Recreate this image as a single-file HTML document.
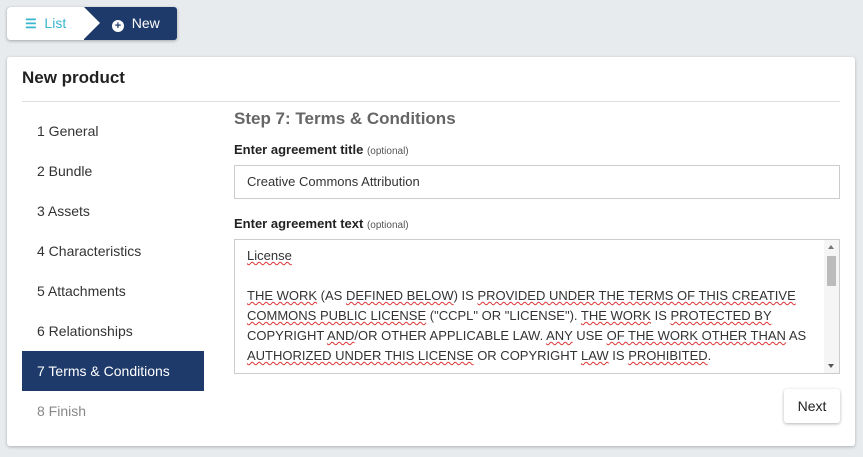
<!DOCTYPE html>
<html><head><style>
*{box-sizing:border-box;margin:0;padding:0}
body{width:863px;height:457px;background:#e8ebee;font-family:"Liberation Sans",sans-serif;color:#333;position:relative;overflow:hidden}
.bc{position:absolute;left:7px;top:7px;width:170px;height:33px;border-radius:3px;box-shadow:0 1px 3px rgba(0,0,0,.3);overflow:hidden;background:#1e3a6a}
.bc .l{position:absolute;left:0;top:0;width:77px;height:33px;background:#fff;color:#3bb6d0;font-size:14px;line-height:33px;padding-left:18px;white-space:nowrap}
.bc .ar{position:absolute;left:77px;top:0;width:0;height:0;border-top:16.5px solid transparent;border-bottom:16.5px solid transparent;border-left:16px solid #fff}
.bc .n{position:absolute;left:105px;top:0;color:#fff;font-size:14px;line-height:33px}
.card{position:absolute;left:7px;top:57px;width:848px;height:389px;background:#fff;border-radius:3px;box-shadow:0 1px 3px rgba(0,0,0,.25)}
h1{position:absolute;left:15px;top:11px;font-size:17px;font-weight:bold;color:#222}
.sep{position:absolute;left:15px;top:44px;width:818px;height:1px;background:#ddd}
.nav{position:absolute;left:15px;top:54px;width:182px}
.nav div{height:40px;line-height:40px;padding-left:15px;font-size:14px;color:#333}
.nav .a{background:#1e3a6a;color:#fff}
.nav .g{color:#888}
.c{position:absolute;left:227px;top:0;width:606px}
h2{position:absolute;top:52px;font-size:17px;color:#666;font-weight:bold}
.lab{position:absolute;font-size:13px;font-weight:bold;color:#222}
.lab small{font-size:10px;font-weight:normal;color:#555}
.inp{position:absolute;top:108px;left:0;width:606px;height:34px;border:1px solid #ccc;font-size:13px;line-height:32px;padding-left:12px;color:#333}
.ta{position:absolute;top:182px;left:0;width:606px;height:135px;border:1px solid #ccc;font-size:13px;line-height:20px;padding:6px 20px 0 12px;color:#333;overflow:hidden}
.ta u{text-decoration:underline wavy #d33;text-decoration-thickness:1px}
.sb{position:absolute;right:0;top:0;width:15px;height:133px;background:#f5f5f5}
.sb .t{position:absolute;left:3px;top:16px;width:9px;height:30px;background:#bbb}
.sb .u{position:absolute;left:4px;top:5px;border-left:3.5px solid transparent;border-right:3.5px solid transparent;border-bottom:4px solid #777}
.sb .d{position:absolute;left:4px;bottom:5px;border-left:3.5px solid transparent;border-right:3.5px solid transparent;border-top:4px solid #555}
.btn{position:absolute;left:777px;top:332px;width:56px;height:34px;border-radius:3px;box-shadow:0 1px 3px rgba(0,0,0,.3);font-size:14px;line-height:34px;text-align:center;color:#222}
</style></head><body>
<div class="bc"><div class="l"><span style="font-size:13px;font-weight:bold">&#9776;</span>&nbsp; List</div><div class="ar"></div><div class="n"><span style="display:inline-block;width:12px;height:12px;border-radius:50%;background:#fff;color:#1e3a6a;font-size:11px;line-height:12px;text-align:center;font-weight:bold;vertical-align:-1px">+</span>&nbsp; New</div></div>
<div class="card">
<h1>New product</h1><div class="sep"></div>
<div class="nav"><div>1 General</div><div>2 Bundle</div><div>3 Assets</div><div>4 Characteristics</div><div>5 Attachments</div><div>6 Relationships</div><div class="a">7 Terms &amp; Conditions</div><div class="g">8 Finish</div></div>
<div class="c">
<h2>Step 7: Terms &amp; Conditions</h2>
<div class="lab" style="top:85px">Enter agreement title <small>(optional)</small></div>
<div class="inp">Creative Commons Attribution</div>
<div class="lab" style="top:159px">Enter agreement text <small>(optional)</small></div>
<div class="ta"><u>License</u><br><br><u>THE WORK</u> (AS <u>DEFINED BELOW</u>) IS <u>PROVIDED UNDER THE TERMS OF THIS CREATIVE COMMONS PUBLIC LICENSE</u> ("CCPL" OR "LICENSE"). <u>THE WORK</u> IS <u>PROTECTED BY</u> COPYRIGHT <u>AND</u>/OR OTHER APPLICABLE LAW. <u>ANY</u> USE <u>OF THE WORK OTHER THAN</u> AS <u>AUTHORIZED UNDER THIS LICENSE</u> OR COPYRIGHT <u>LAW</u> IS <u>PROHIBITED</u>.<div class="sb"><div class="u"></div><div class="t"></div><div class="d"></div></div></div>
</div>
<div class="btn">Next</div>
</div>
</body></html>
